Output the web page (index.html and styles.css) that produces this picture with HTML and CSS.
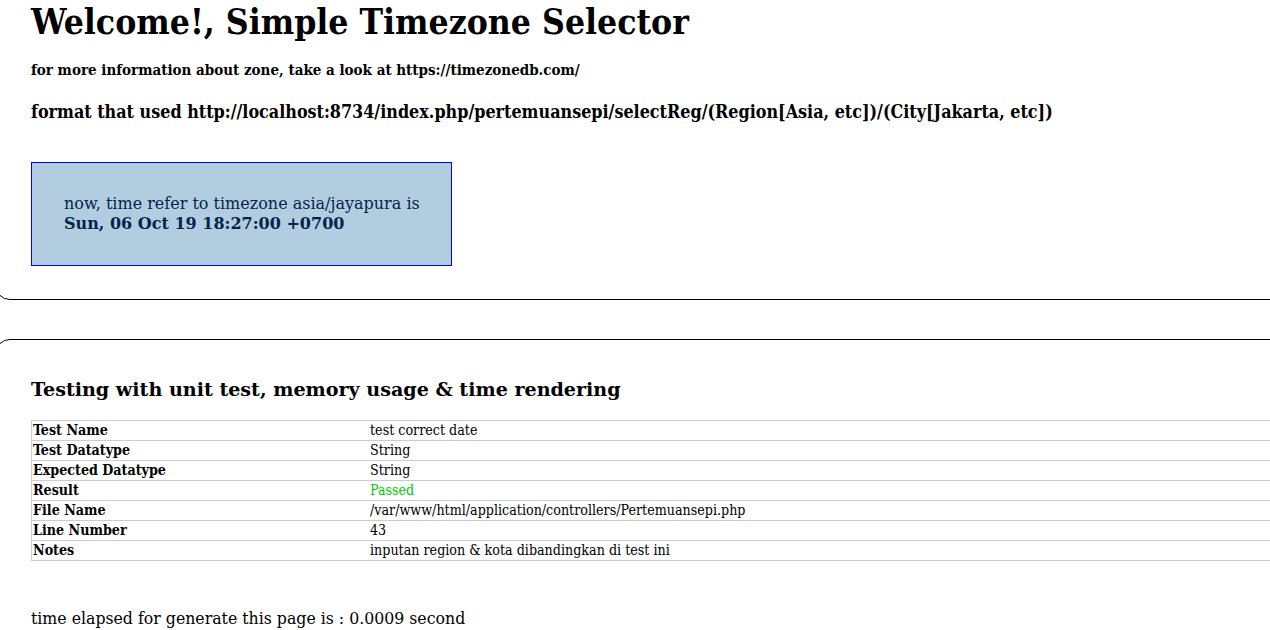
FILE: index.html
```html
<!DOCTYPE html>
<html>
<head>
<meta charset="utf-8">
<title>Simple Timezone Selector</title>
<link rel="stylesheet" href="styles.css">
</head>
<body>
<div class="panel panel-top">
  <h1 class="title">Welcome!, Simple Timezone Selector</h1>
  <h5 class="info">for more information about zone, take a look at https://timezonedb.com/</h5>
  <h3 class="format">format that used http://localhost:8734/index.php/pertemuansepi/selectReg/(Region[Asia, etc])/(City[Jakarta, etc])</h3>
  <div class="timebox">
    <p>now, time refer to timezone asia/jayapura is<br><b>Sun, 06 Oct 19 18:27:00 +0700</b></p>
  </div>
</div>
<div class="panel panel-bottom">
  <h3 class="testing">Testing with unit test, memory usage &amp; time rendering</h3>
  <table class="results">
    <tr><th>Test Name</th><td>test correct date</td></tr>
    <tr><th>Test Datatype</th><td>String</td></tr>
    <tr><th>Expected Datatype</th><td>String</td></tr>
    <tr><th>Result</th><td><span class="passed">Passed</span></td></tr>
    <tr><th>File Name</th><td>/var/www/html/application/controllers/Pertemuansepi.php</td></tr>
    <tr><th>Line Number</th><td>43</td></tr>
    <tr><th>Notes</th><td>inputan region &amp; kota dibandingkan di test ini</td></tr>
  </table>
  <p class="elapsed">time elapsed for generate this page is : 0.0009 second</p>
</div>
</body>
</html>
```

FILE: styles.css
```css
html, body {
  margin: 0;
  padding: 0;
  overflow: hidden;
  background: #fff;
  color: #000;
  font-family: "DejaVu Serif", serif;
}

.panel {
  width: calc(100% + 60px);
  margin-left: -5px;
  padding: 0 0 0 35px;
  border: 1px solid #000;
  border-radius: 15px;
  box-sizing: border-box;
}

.panel-top {
  margin-top: -20px;
  padding-top: 20px;
  padding-bottom: 33px;
}

.panel-bottom {
  margin-top: 39px;
  padding-top: 38px;
}

.title {
  font-family: "DejaVu Serif", serif;
  font-stretch: condensed;
  font-size: 35.2px;
  font-weight: bold;
  line-height: 40px;
  margin: 1px 0 0 0;
}

.info {
  font-family: "DejaVu Serif", serif;
  font-stretch: condensed;
  font-size: 15px;
  font-weight: bold;
  line-height: 18px;
  margin: 19px 0 0 0;
}

.format {
  font-family: "DejaVu Serif", serif;
  font-stretch: condensed;
  font-size: 17.8px;
  font-weight: bold;
  line-height: 22px;
  margin: 22px 0 0 0;
}

.timebox {
  width: 421px;
  height: 104px;
  margin-top: 39px;
  box-sizing: border-box;
  background: #b3cde0;
  border: 1px solid #0000ff;
  padding: 31px 10px 0 32px;
  color: #03254c;
  font-size: 16px;
  line-height: 20px;
}

.timebox p {
  margin: 0;
}

.testing {
  font-family: "DejaVu Serif", serif;
  font-size: 19.1px;
  font-weight: bold;
  line-height: 24px;
  margin: 0 0 18px 0;
}

.results {
  width: calc(100% + 20px);
  border-collapse: collapse;
  font-family: "DejaVu Serif", serif;
  font-stretch: condensed;
  font-size: 14.15px;
}

.results th,
.results td {
  border-top: 1px solid #ccc;
  border-bottom: 1px solid #ccc;
  padding: 0 1px;
  height: 19px;
  line-height: 19px;
  text-align: left;
  vertical-align: middle;
}

.results th {
  width: 335px;
  border-left: 1px solid #ccc;
}

.passed {
  color: #00cc00;
}

.elapsed {
  font-size: 15.75px;
  line-height: normal;
  margin: 48px 0 0 0;
  padding-bottom: 20px;
}
```
